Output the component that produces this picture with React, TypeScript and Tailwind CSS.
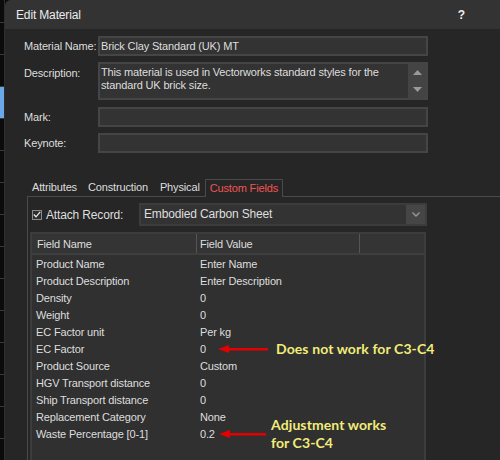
import React from "react";

const font = { fontFamily: '"Liberation Sans", Arial, sans-serif' };

const rows: [string, string][] = [
  ["Product Name", "Enter Name"],
  ["Product Description", "Enter Description"],
  ["Density", "0"],
  ["Weight", "0"],
  ["EC Factor unit", "Per kg"],
  ["EC Factor", "0"],
  ["Product Source", "Custom"],
  ["HGV Transport distance", "0"],
  ["Ship Transport distance", "0"],
  ["Replacement Category", "None"],
  ["Waste Percentage [0-1]", "0.2"],
];

function Field({ label, children }: { label: string; children?: React.ReactNode }) {
  return (
    <div className="flex">
      <div className="w-[74px] shrink-0 whitespace-nowrap leading-[20px]">{label}</div>
      <div className="w-[330px] h-[20px] border-2 border-[#454545] bg-[#333333] leading-[16px] pl-[1px]">
        {children}
      </div>
    </div>
  );
}

function LeftStrip() {
  return (
    <div className="w-[5px] shrink-0 bg-[#0b0b0b] border-r border-[#2e2e2e] flex flex-col overflow-hidden">
      {Array.from({ length: 15 }).map((_, i) => (
        <div
          key={i}
          className={`h-[32px] shrink-0 border-b border-[#3a3a3a] ${i === 3 ? "bg-[#6aa8e8]" : ""}`}
          style={i === 0 ? { marginTop: -9 } : undefined}
        />
      ))}
    </div>
  );
}

function Arrow({ x, y, w }: { x: number; y: number; w: number }) {
  return (
    <svg className="absolute" style={{ left: x, top: y - 5 }} width={w} height="10" viewBox={`0 0 ${w} 10`}>
      <polygon points="0,5 11,1 11,9" fill="#e50000" />
      <rect x="10" y="4" width={w - 10} height="2.5" fill="#e50000" />
    </svg>
  );
}

export default function App() {
  return (
    <div className="relative w-[500px] h-[460px] overflow-hidden flex bg-[#0b0b0b] text-[11px] text-[#dedede] tracking-[-0.15px]" style={font}>
      <LeftStrip />
      <div className="flex-1 flex flex-col bg-[#262626] rounded-tl-[6px] overflow-hidden">
        <div className="h-[29px] shrink-0 bg-[#333333] flex items-center justify-between pl-[11px] pr-[35px] text-[12px] text-[#ececec]">
          <span>Edit Material</span>
          <span className="font-bold text-[12px]">?</span>
        </div>

        <div className="flex-1 pl-[19px] pt-[7px] flex flex-col">
          <div className="flex flex-col gap-[6px]">
            <Field label="Material Name:">Brick Clay Standard (UK) MT</Field>
            <div className="flex">
              <div className="w-[74px] shrink-0 pt-[3px]">Description:</div>
              <div className="w-[330px] h-[38px] border-2 border-[#454545] bg-[#333333] flex">
                <div className="flex-1 pl-[1px] pt-[2px] leading-[13px]">
                  This material is used in Vectorworks standard styles for the standard UK brick size.
                </div>
                <div className="w-[18px] bg-[#444444] flex flex-col items-center justify-between py-[6px]">
                  <svg width="9" height="5" viewBox="0 0 9 5"><polygon points="0,5 4.5,0 9,5" fill="#9a9a9a" /></svg>
                  <svg width="9" height="5" viewBox="0 0 9 5"><polygon points="0,0 9,0 4.5,5" fill="#9a9a9a" /></svg>
                </div>
              </div>
            </div>
            <div className="mt-[1px]">
              <Field label="Mark:" />
            </div>
            <Field label="Keynote:" />
          </div>

          <div className="ml-[3px] mt-[26px] w-[480px] flex flex-col">
            <div className="flex items-end h-[18px]">
              <div className="border-b border-[#4a4a4a] h-full flex items-end">
                <span className="pl-[5px] pr-[6px] leading-[17px]">Attributes</span>
                <span className="pl-[5px] pr-[6px] leading-[17px]">Construction</span>
                <span className="pl-[6px] pr-[5px] leading-[17px]">Physical</span>
              </div>
              <div className="h-full border border-b-0 border-[#4a4a4a] pl-[4px] pr-[4px] leading-[17px] text-[#f05454]">Custom Fields</div>
              <div className="flex-1 h-full border-b border-[#4a4a4a]" />
            </div>

            <div className="border-l border-[#4a4a4a] h-[300px] pt-[6px]">
              <div className="flex items-center h-[23px]">
                <div className="ml-[4px] w-[10px] h-[10px] border border-[#8a8a8a] bg-[#2e2e2e] flex items-center justify-center">
                  <svg width="8" height="7" viewBox="0 0 8 7">
                    <polyline points="0.8,3.5 3,5.8 7.2,0.8" fill="none" stroke="#e8e8e8" strokeWidth="1.3" />
                  </svg>
                </div>
                <span className="ml-[4px] w-[93px] text-[12px]">Attach Record:</span>
                <div className="w-[288px] h-[23px] border-2 border-[#3c3c3c] bg-[#333333] flex">
                  <span className="flex-1 pl-[3px] leading-[19px] text-[12px]">Embodied Carbon Sheet</span>
                  <div className="w-[19px] bg-[#464646] flex items-center justify-center">
                    <svg width="8" height="5" viewBox="0 0 8 5">
                      <polyline points="0.5,0.5 4,4 7.5,0.5" fill="none" stroke="#9a9a9a" strokeWidth="1.3" />
                    </svg>
                  </div>
                </div>
              </div>

              <div className="ml-[2px] mt-[6px] w-[396px] h-[240px] border-2 border-b-0 border-[#3c3c3c] bg-[#303030]">
                <div className="flex h-[21px] bg-[#343434] border-b-2 border-[#3e3e3e] leading-[21px]">
                  <div className="w-[165px] pl-[5px] border-r border-[#555555]">Field Name</div>
                  <div className="w-[163px] pl-[3px] border-r border-[#555555]">Field Value</div>
                  <div className="flex-1" />
                </div>
                <div className="pt-[1px]">
                  {rows.map(([n, v]) => (
                    <div key={n} className="flex h-[17px] leading-[17px]">
                      <div className="w-[165px] pl-[4px]">{n}</div>
                      <div className="pl-[3px]">{v}</div>
                    </div>
                  ))}
                </div>
              </div>
            </div>
          </div>
        </div>
      </div>

      <Arrow x={218} y={349} w={50} />
      <Arrow x={219} y={434} w={47} />
      <div
        className="absolute left-[276px] top-[340px] text-[14px] font-bold text-[#f2ec7a] tracking-[0.1px] leading-[18px]"
        style={{ fontFamily: 'Lato, "Liberation Sans", sans-serif' }}
      >
        Does not work for C3-C4
      </div>
      <div
        className="absolute left-[271px] top-[416px] text-[14px] font-bold text-[#f2ec7a] tracking-[0.1px] leading-[18px]"
        style={{ fontFamily: 'Lato, "Liberation Sans", sans-serif' }}
      >
        Adjustment works
        <br />
        for C3-C4
      </div>
    </div>
  );
}
